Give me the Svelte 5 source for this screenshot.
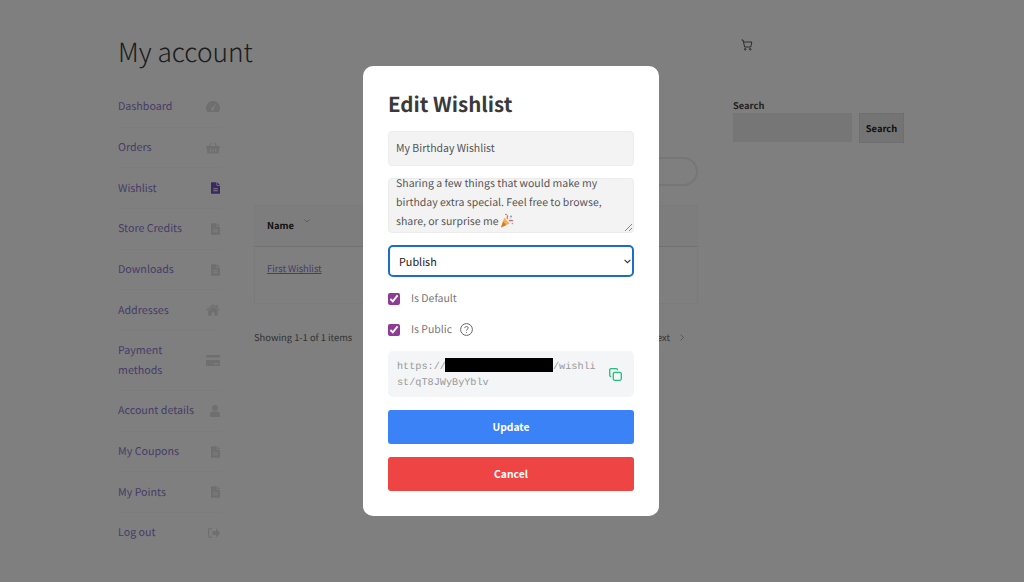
<script lang="ts">
  type NavItem = { label: string, icon: string, active?: boolean }

  const nav: NavItem[] = [
    { label: 'Dashboard', icon: 'gauge' },
    { label: 'Orders', icon: 'basket' },
    { label: 'Wishlist', icon: 'file', active: true },
    { label: 'Store Credits', icon: 'file' },
    { label: 'Downloads', icon: 'file' },
    { label: 'Addresses', icon: 'home' },
    { label: 'Payment methods', icon: 'card' },
    { label: 'Account details', icon: 'user' },
    { label: 'My Coupons', icon: 'file' },
    { label: 'My Points', icon: 'file' },
    { label: 'Log out', icon: 'logout' },
  ]
</script>

{#snippet navIcon(name: string)}
  {#if name === 'gauge'}
    <svg class="nav-icon" width="14" height="12" viewBox="0 0 14 12"><path fill-rule="evenodd" d="M7 0a7 7 0 0 1 6 10.6c-.2.3-.5.4-.8.4H1.8c-.3 0-.6-.1-.8-.4A7 7 0 0 1 7 0zm2.2 3.2L6.6 6.6a1.4 1.4 0 1 0 1.2.6l2.1-3.6z"/></svg>
  {:else if name === 'basket'}
    <svg class="nav-icon" width="14" height="12" viewBox="0 0 14 12"><path fill-rule="evenodd" d="M5.2.3l.9.4L4.2 4h5.6L7.9.7l.9-.4L11 4h3v1.4h-.6l-.8 6.1H1.4L.6 5.4H0V4h3zM3.8 6.4v3.8h1V6.4zm2.7 0v3.8h1V6.4zm2.7 0v3.8h1V6.4z"/></svg>
  {:else if name === 'file'}
    <svg class="nav-icon" width="9" height="12" viewBox="0 0 10 13"><path fill-rule="evenodd" d="M0 .8C0 .4.3 0 .8 0H6v3.2c0 .4.4.8.8.8H10v8.2c0 .4-.3.8-.8.8H.8c-.5 0-.8-.4-.8-.8zm2.5 6v1h5v-1zm0 2.2v1h5V9zM6.8 0 10 3.2H6.8z"/></svg>
  {:else if name === 'home'}
    <svg class="nav-icon" width="14" height="12" viewBox="0 0 14 12"><path d="M7 2.2 2.2 6.2v5.1c0 .3.2.5.5.5h3V8.3h2.6v3.5h3c.3 0 .5-.2.5-.5V6.2zM7 0 0 5.7l.8 1L7 1.6l6.2 5.1.8-1-2.4-2V.8h-1.8v1.4z"/></svg>
  {:else if name === 'card'}
    <svg class="nav-icon" width="14" height="11" viewBox="0 0 14 11"><path d="M0 1c0-.6.4-1 1-1h12c.6 0 1 .4 1 1v1.600H0zM0 5h14v5c0 .6-.4 1-1 1H1c-.6 0-1-.4-1-1zm8.500 3v1.200H12V8z"/></svg>
  {:else if name === 'user'}
    <svg class="nav-icon" width="10" height="12" viewBox="0 0 10 12"><circle cx="5" cy="3" r="3"/><path d="M2.400 6.400h5.200C9 6.400 10 7.500 10 9v2c0 .6-.4 1-1 1H1c-.6 0-1-.4-1-1V9c0-1.500 1-2.600 2.400-2.600z"/></svg>
  {:else}
    <svg class="nav-icon" width="12" height="10" viewBox="0 0 12 10"><path d="M8 0l4 5-4 5V7H4.500V3H8zM0 1.500C0 .7.700 0 1.500 0H4v1.200H1.500c-.2 0-.3.100-.3.300v7c0 .2.100.3.300.3H4V10H1.500C.7 10 0 9.300 0 8.500z"/></svg>
  {/if}
{/snippet}

<div class="page">
  <div class="account">
    <h1>My account</h1>
    <div class="columns">
      <nav>
        {#each nav as item}
          <a href="#nav" class="nav-row" class:active={item.active}>
            <span>{item.label}</span>
            {@render navIcon(item.icon)}
          </a>
        {/each}
      </nav>
      <div class="content">
        <div class="search-pill"></div>
        <table>
          <thead>
            <tr>
              <th class="col-name">Name <svg class="sort" width="6" height="4" viewBox="0 0 6 4" fill="none" stroke="#bbb"><path d="M.5.5 3 3 5.500.5"/></svg></th>
              <th></th>
            </tr>
          </thead>
          <tbody>
            <tr>
              <td><a href="#first">First Wishlist</a></td>
              <td class="actions">
                <svg width="9" height="11" viewBox="0 0 9 11" fill="none" stroke="#bbb"><path d="M.5.5h5l3 3v7h-8zM2 6h5"/></svg>
              </td>
            </tr>
          </tbody>
        </table>
        <div class="pager">
          <span>Showing 1-1 of 1 items</span>
          <span class="next">Next <svg width="4" height="7" viewBox="0 0 4 7" fill="none" stroke="#aaa"><path d="M.5.5 3.500 3.500.5 6.500"/></svg></span>
        </div>
      </div>
    </div>
  </div>
  <aside>
    <svg class="cart" width="12" height="12" viewBox="0 0 12 12" fill="none" stroke="#333" stroke-width=".8"><path d="M.5 1h1.600l1.500 7h6.200l1-5H2.500"/><circle cx="4.200" cy="10.300" r=".8"/><circle cx="9.200" cy="10.300" r=".8"/></svg>
    <div class="widget">
      <div class="widget-label">Search</div>
      <div class="widget-row">
        <div class="widget-input"></div>
        <div class="widget-btn">Search</div>
      </div>
    </div>
  </aside>
</div>

<div class="overlay">
  <form class="modal">
    <h2>Edit Wishlist</h2>
    <input class="field" type="text" value="My Birthday Wishlist" />
    <div class="area">
      <p>Sharing a few things that would make my birthday extra special. Feel free to browse, share, or surprise me<svg class="party" width="14" height="15" viewBox="0 0 14 15"><path fill="#f2b14a" d="M1 14.500 4.200 4.800l5.300 5.600z"/><path fill="#d9772f" d="M1 14.500 3 8.500l3.300 3.500z"/><path fill="none" stroke="#e0568a" stroke-width="1.200" d="M7 6c.5-1.500 0-2.500 1-3.500M9 8c1-.8 2.500-.8 4-.3"/><circle cx="11" cy="3.500" r="1" fill="#5aa6e0"/><circle cx="6" cy="1.500" r=".8" fill="#e8503f"/><circle cx="12.500" cy="10.500" r=".8" fill="#7cc16a"/><circle cx="10" cy="5.800" r=".7" fill="#f2c94c"/></svg></p>
      <svg class="grip" width="7" height="7" viewBox="0 0 7 7" stroke="#666" stroke-width=".8"><path d="M0 7 7 0M4 7l3-3"/></svg>
    </div>
    <div class="select-wrap">
      <select class="status">
        <option>Publish</option>
        <option>Private</option>
      </select>
      <svg class="chevron" width="7" height="5" viewBox="0 0 7 5" fill="none" stroke="#333" stroke-width="1.100"><path d="M.6.8 3.500 3.700 6.400.8"/></svg>
    </div>
    <label class="check"><input type="checkbox" checked /> <span>Is Default</span></label>
    <label class="check">
      <input type="checkbox" checked /> <span>Is Public</span>
      <svg class="help" width="13" height="13" viewBox="0 0 13 13" fill="none" stroke="#666" stroke-width="1"><circle cx="6.500" cy="6.500" r="5.900"/><path d="M4.800 5.100c0-1 .8-1.600 1.700-1.600s1.700.6 1.700 1.500c0 1.200-1.700 1.300-1.700 2.500"/><path d="M6.500 9.100v.8"/></svg>
    </label>
    <div class="share">
      <div class="url">https://<span class="redacted"></span>/wishlist/qT8JWyByYblv</div>
      <svg width="13" height="13" viewBox="0 0 13 13" fill="none" stroke="#22c07a" stroke-width="1.300"><rect x="4.300" y="4.300" width="8" height="8" rx="1.500"/><path d="M8.500 2.200V2c0-.8-.5-1.300-1.300-1.300H2C1.200.7.700 1.200.7 2v5.200c0 .8.500 1.300 1.300 1.300h.2"/></svg>
    </div>
    <button type="button" class="btn update">Update</button>
    <button type="button" class="btn cancel">Cancel</button>
  </form>
</div>

<style>
  :global(body) {
    margin: 0;
    background: #fff;
    font-family: "Noto Sans CJK SC", "Noto Sans", sans-serif;
    text-rendering: geometricPrecision;
  }
  .page {
    display: flex;
    height: 582px;
    overflow: hidden;
    padding-left: 118px;
    box-sizing: border-box;
    color: #333;
  }
  .account { width: 580px; }
  h1 {
    margin: 0;
    padding-top: 29px;
    font-size: 26.300px;
    line-height: 44px;
    font-weight: 300;
    color: #3a3a3a;
  }
  .columns {
    display: flex;
    gap: 34px;
    margin-top: 14px;
  }
  nav { width: 102px; }
  .nav-row {
    display: flex;
    justify-content: space-between;
    align-items: center;
    box-sizing: border-box;
    padding: 10.200px 0;
    font-size: 10.700px;
    line-height: 19.300px;
    color: #8e7ad0;
    text-decoration: none;
    border-bottom: 1px solid #f8f8f8;
  }
  .nav-row:last-child { border-bottom: 0; }
  .nav-row:nth-child(7) span { max-width: 60px; }
  .nav-icon { fill: #dedede; flex: none; }
  .nav-row.active .nav-icon { fill: #7552c0; }
  .content {
    width: 444px;
    padding-top: 70px;
  }
  .search-pill {
    height: 29px;
    margin-left: auto;
    width: 200px;
    box-sizing: border-box;
    border: 2px solid #ececec;
    border-radius: 15px;
  }
  table {
    width: 100%;
    margin-top: 19px;
    border-collapse: collapse;
    border: 1px solid #f6f6f6;
    font-size: 9.300px;
  }
  th {
    height: 41px;
    padding: 0 12px 2px;
    box-sizing: border-box;
    text-align: left;
    font-weight: 600;
    color: #222;
    background: #fafafa;
    border-bottom: 1px solid #e4e4e4;
  }
  .sort { margin: 0 0 6px 8px; }
  td {
    height: 57px;
    padding: 0 12px 14px;
    box-sizing: border-box;
  }
  td a { color: #8e7ad0; }
  .actions { width: 60px; padding-left: 8px; }
  .pager {
    display: flex;
    justify-content: space-between;
    margin-top: 24px;
    padding-right: 15px;
    font-size: 9.400px;
    line-height: 18px;
    color: #666;
  }
  .next { display: flex; align-items: center; gap: 10px; margin-right: -1px; }
  aside {
    margin-left: 35px;
    width: 172px;
  }
  .cart {
    display: block;
    margin: 39px 0 0 8px;
  }
  .widget { margin-top: 47px; }
  .widget-label {
    font-size: 9.300px;
    line-height: 14px;
    font-weight: 600;
    color: #444;
  }
  .widget-row {
    display: flex;
    gap: 7px;
    margin-top: 1px;
  }
  .widget-input {
    width: 119px;
    height: 29px;
    background: #ececec;
  }
  .widget-btn {
    width: 45px;
    height: 30px;
    box-sizing: border-box;
    border: 1px solid #dfdfdf;
    background: #e8e8e8;
    font-size: 9.300px;
    font-weight: 600;
    line-height: 28px;
    text-align: center;
    color: #222;
  }
  .overlay {
    position: fixed;
    inset: 0;
    display: flex;
    align-items: center;
    justify-content: center;
    padding-right: 2px;
    background: rgba(0, 0, 0, .5);
  }
  .modal {
    box-sizing: border-box;
    display: flex;
    flex-direction: column;
    gap: 12px;
    width: 296px;
    height: 450px;
    padding: 21px 25px 25px;
    background: #fff;
    border-radius: 10px;
  }
  h2 {
    margin: 0;
    font-size: 20.500px;
    line-height: 32px;
    font-weight: 600;
    color: #3a3a3a;
  }
  .field {
    box-sizing: border-box;
    height: 35px;
    padding: 0 7px 2px;
    border: 1px solid #ededed;
    border-radius: 4px;
    background: #f3f3f3;
    font: 10.500px "Noto Sans CJK SC", sans-serif;
    color: #555;
    outline: none;
  }
  .area {
    position: relative;
    box-sizing: border-box;
    height: 55px;
    overflow: hidden;
    padding: 0 7px;
    border: 1px solid #ececec;
    border-radius: 4px;
    background: #f3f3f3;
    font-size: 10.500px;
    line-height: 19.200px;
    color: #555;
  }
  .area p { margin: -5px 0 0; }
  .party { vertical-align: -3px; margin-left: 1px; }
  .grip { position: absolute; right: 1px; bottom: 1px; }
  .select-wrap { position: relative; height: 32px; }
  .status {
    box-sizing: border-box;
    width: 100%;
    height: 32px;
    padding: 0 9px;
    border: 2px solid #1a6fc4;
    border-radius: 5px;
    background: #fff;
    font: 10.800px "Noto Sans CJK SC", sans-serif;
    color: #222;
    outline: none;
    appearance: none;
  }
  .chevron { position: absolute; right: 3px; top: 14px; }
  .check {
    display: flex;
    align-items: center;
    height: 19px;
    font-size: 10.500px;
    line-height: 19px;
    color: #777;
  }
  .check input {
    width: 12px;
    height: 12px;
    margin: 0 11px 0 0;
    accent-color: #8f3a96;
  }
  .help { margin-left: 8px; }
  .share {
    display: flex;
    align-items: center;
    justify-content: space-between;
    box-sizing: border-box;
    height: 46px;
    padding: 1px 12px 0 9px;
    border-radius: 5px;
    background: #f3f5f6;
  }
  .url {
    width: 203px;
    font: 10.200px/16px "Liberation Mono", monospace;
    word-break: break-all;
    color: #999;
  }
  .redacted {
    display: inline-block;
    width: 108px;
    height: 14px;
    margin-left: -1px;
    vertical-align: -3px;
    background: #000;
  }
  .btn {
    height: 34px;
    margin-top: 1px;
    padding-bottom: 2px;
    border: 0;
    border-radius: 3px;
    color: #fff;
    font: 600 10.300px "Noto Sans CJK SC", sans-serif;
  }
  .update { background: #3b82f6; }
  .cancel { background: #ef4444; }
</style>
